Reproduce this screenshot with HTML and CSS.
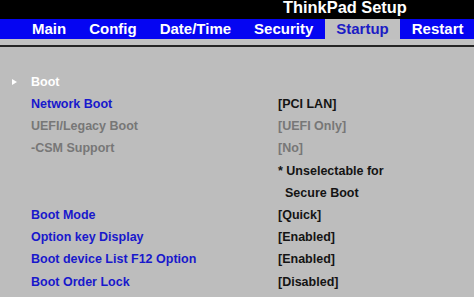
FILE: index.html
```html
<!DOCTYPE html>
<html lang="en">
<head>
    <meta charset="UTF-8">
    <meta name="viewport" content="width=device-width, initial-scale=1.0">
    <title>ThinkPad Setup</title>
    <link rel="stylesheet" href="styles.css">
</head>
<body>
    <header class="title-bar">
        <h1>ThinkPad Setup</h1>
    </header>
    <nav class="tabs">
        <span class="tab">Main</span>
        <span class="tab">Config</span>
        <span class="tab">Date/Time</span>
        <span class="tab">Security</span>
        <span class="tab active">Startup</span>
        <span class="tab">Restart</span>
    </nav>
    <div class="divider"></div>
    <section class="panel">
        <div class="row">
            <span class="label submenu"><i class="arrow"></i>Boot</span>
        </div>
        <div class="row">
            <span class="label">Network Boot</span>
            <span class="value">[PCI LAN]</span>
        </div>
        <div class="row disabled">
            <span class="label">UEFI/Legacy Boot</span>
            <span class="value">[UEFI Only]</span>
        </div>
        <div class="row disabled">
            <span class="label">-CSM Support</span>
            <span class="value">[No]</span>
        </div>
        <div class="row">
            <span class="label"></span>
            <span class="value">* Unselectable for</span>
        </div>
        <div class="row">
            <span class="label"></span>
            <span class="value note">Secure Boot</span>
        </div>
        <div class="row">
            <span class="label">Boot Mode</span>
            <span class="value">[Quick]</span>
        </div>
        <div class="row">
            <span class="label">Option key Display</span>
            <span class="value">[Enabled]</span>
        </div>
        <div class="row">
            <span class="label">Boot device List F12 Option</span>
            <span class="value">[Enabled]</span>
        </div>
        <div class="row">
            <span class="label">Boot Order Lock</span>
            <span class="value">[Disabled]</span>
        </div>
    </section>
</body>
</html>
```

FILE: styles.css
```css
* {
    box-sizing: border-box;
    padding: 0;
    margin: 0;
}
body {
    font-family: 'Liberation Sans', Arial, sans-serif;
    font-weight: bold;
    background: #bdbdbd;
    overflow: hidden;
}
.title-bar {
    background: #000;
    height: 19px;
    padding-left: 283px;
}
.title-bar h1 {
    color: #fff;
    font-size: 16.4px;
    line-height: 15px;
    font-weight: bold;
}
.tabs {
    display: flex;
    background: #0505f2;
    height: 20px;
    padding-left: 20.5px;
}
.tab {
    color: #fff;
    font-size: 15px;
    line-height: 20px;
    padding: 0 11.5px;
    white-space: nowrap;
}
.tab.active {
    background: #c0c0c0;
    color: #1c1cc4;
}
.divider {
    height: 8px;
    background: #c2c2c2;
    border-bottom: 2px solid #262626;
}
.panel {
    padding-top: 23.8px;
}
.row {
    display: flex;
    font-size: 12.5px;
    line-height: 22.2px;
    white-space: nowrap;
}
.label {
    width: 278px;
    padding-left: 31px;
    color: #1818cc;
}
.label.submenu {
    color: #fff;
    position: relative;
}
.arrow {
    position: absolute;
    left: 12px;
    top: 8px;
    border-left: 5px solid #fff;
    border-top: 3.5px solid transparent;
    border-bottom: 3.5px solid transparent;
}
.value {
    color: #141414;
}
.value.note {
    padding-left: 7px;
}
.disabled .label, .disabled .value {
    color: #777;
}
```
